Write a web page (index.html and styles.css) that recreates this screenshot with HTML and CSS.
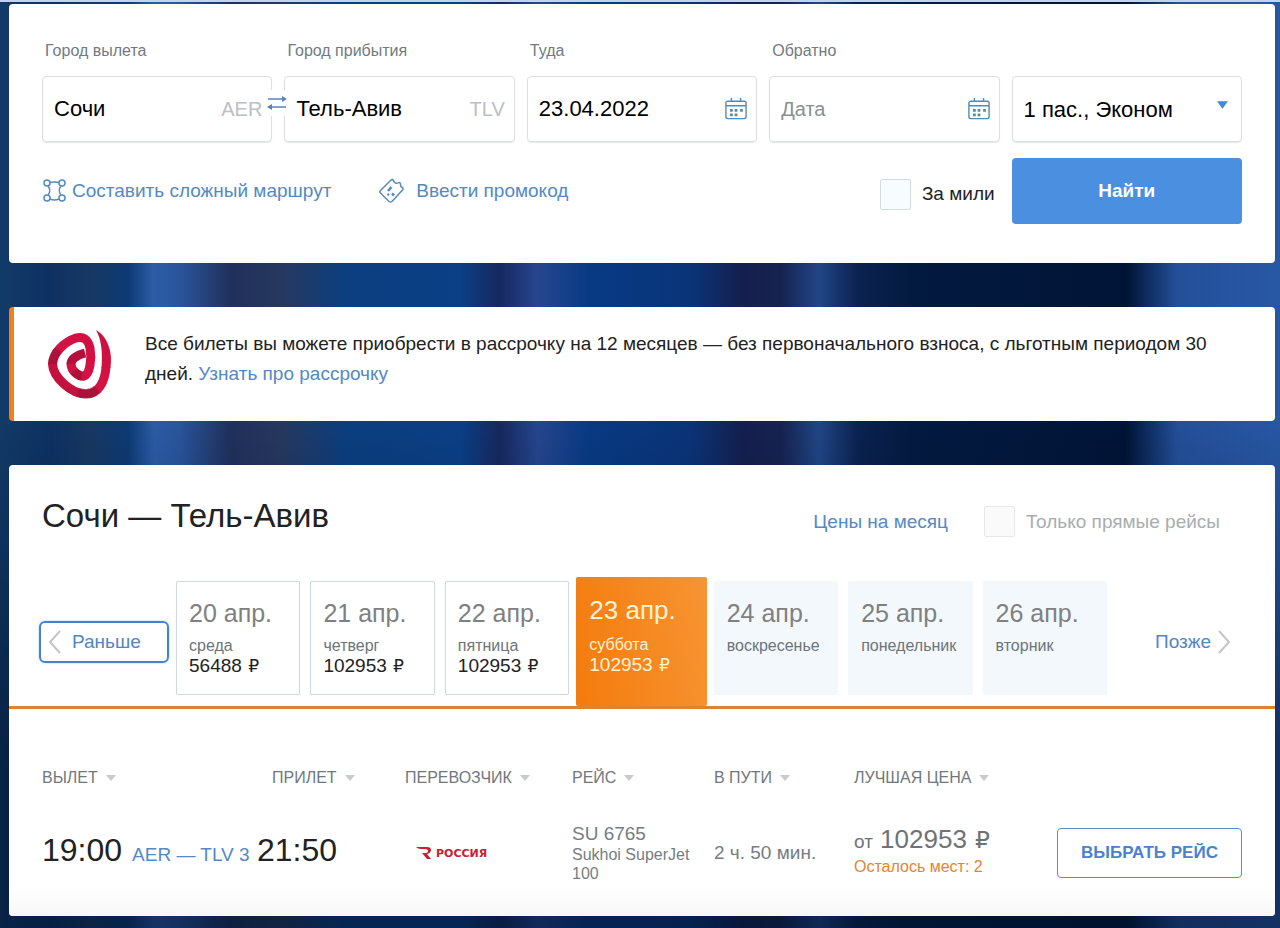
FILE: index.html
```html
<!DOCTYPE html>
<html lang="ru">
<head>
<meta charset="utf-8">
<meta name="viewport" content="width=device-width, initial-scale=1">
<title>Сочи — Тель-Авив</title>
<link rel="stylesheet" href="styles.css">
</head>
<body>
<svg class="defs" aria-hidden="true">
  <symbol id="calendar" viewBox="0 0 24 24">
    <path d="M3 3.500h18a2 2 0 0 1 2 2v15a2 2 0 0 1-2 2h-18a2 2 0 0 1-2-2v-15a2 2 0 0 1 2-2zM1 8.500h22M7 0v4M17 0v4" fill="none" stroke="currentColor" stroke-width="1.500"/>
    <path d="M10.500 12h3v3h-3zM5.500 12h3v3h-3zM16.500 12h3v3h-3zM5.500 17h3v3h-3zM10.500 17h3v3h-3z" fill="currentColor"/>
  </symbol>
</svg>
<main class="page">
  <form class="card search">
    <div class="field">
      <label class="field-label" for="from">Город вылета</label>
      <div class="box">
        <input class="control" id="from" type="text" value="Сочи">
        <span class="code">AER</span>
      </div>
      <button class="swap" type="button" aria-label="Поменять местами">
        <svg width="20" height="14" viewBox="0 0 20 14"><path d="M1 3h16M3 11h16" stroke="currentColor" stroke-width="1.500"/><path d="M15 0l5 3-5 3zM5 8l-5 3 5 3z" fill="currentColor"/></svg>
      </button>
    </div>
    <div class="field">
      <label class="field-label" for="to">Город прибытия</label>
      <div class="box">
        <input class="control" id="to" type="text" value="Тель-Авив">
        <span class="code">TLV</span>
      </div>
    </div>
    <div class="field">
      <label class="field-label" for="out">Туда</label>
      <div class="box">
        <input class="control" id="out" type="text" value="23.04.2022">
        <svg class="calendar"><use href="#calendar"/></svg>
      </div>
    </div>
    <div class="field">
      <label class="field-label" for="back">Обратно</label>
      <div class="box">
        <input class="control" id="back" type="text" placeholder="Дата">
        <svg class="calendar"><use href="#calendar"/></svg>
      </div>
    </div>
    <div class="field field-last">
      <div class="box">
        <select class="control" aria-label="Пассажиры и класс"><option>1 пас., Эконом</option></select>
        <svg class="caret" width="11" height="8" viewBox="0 0 12 8"><path d="M0 0h12L6 8z" fill="currentColor"/></svg>
      </div>
    </div>
    <div class="links">
      <a class="link icon-link" href="#">
        <svg width="24" height="24" viewBox="0 0 24 24" fill="none" stroke="currentColor" stroke-width="1.500"><circle cx="5" cy="4" r="3"/><circle cx="20" cy="4" r="3"/><circle cx="5" cy="19" r="3"/><circle cx="20" cy="19" r="3"/><path d="M8 3.500q4.500-1 9 0M8 20q4.500 2 9 0M6 7q3.500 4.500 0 9M19 7q-3.500 4.500 0 9"/></svg>
        Составить сложный маршрут
      </a>
      <a class="link icon-link promo" href="#">
        <svg width="26" height="26" viewBox="0 0 26 26" fill="none" stroke="currentColor" stroke-width="1.500"><path d="M2 13L13 2q1.500-1 2.500.500.500 2 2 2.500 2 .500 3.500-.500 1.500 0 1.500 2 0 2.500 2 3 1 1.500 0 2.500L14 23.500q-1.500 1-3 0L2.500 15q-1-1-.500-2z"/><path d="M10 13l3.500-4" stroke-width="2.500"/><path d="M9.500 16l1.500 1M14 15.500l2 2" stroke-width="2.500"/></svg>
        Ввести промокод
      </a>
    </div>
    <label class="check miles"><input class="tick" type="checkbox">За мили</label>
    <button class="submit" type="submit">Найти</button>
  </form>

  <section class="card offer">
    <svg class="offer-logo" width="66" height="72" viewBox="0 0 66 72">
      <defs>
        <linearGradient id="swirl" x1="0" y1="1" x2="1" y2="0">
          <stop offset="0" stop-color="#b80f3a"/>
          <stop offset=".5" stop-color="#d51243"/>
          <stop offset="1" stop-color="#cf1141"/>
        </linearGradient>
      </defs>
      <path d="M38 24C30 26 24 30 24 35 24 42 32 48 37 47 43 45 45 30 43 19 41 10 36 7 29 9 17 13 6 24 5.500 35 6 48 24 65 39 65 52 65 58 52 59 38" fill="none" stroke="url(#swirl)" stroke-width="9"/>
      <path d="M54.500 39C56 22 54 10 49 1 60 7 66 22 63.500 39z" fill="#cf1141"/>
      <path d="M24 35Q24 28 38 24M5.500 35Q6 28 11 21M31 63Q42 67 50 60M27 42Q30 46 35 47" fill="none" stroke="#7d1231" stroke-width="9" opacity=".4"/>
    </svg>
    <p class="offer-text">Все билеты вы можете приобрести в рассрочку на 12 месяцев — без первоначального взноса, с льготным периодом 30 дней. <a class="link" href="#">Узнать про рассрочку</a></p>
  </section>

  <section class="card results">
    <header class="results-head">
      <h1 class="title">Сочи — Тель-Авив</h1>
      <a class="link month" href="#">Цены на месяц</a>
      <label class="check direct"><input class="tick" type="checkbox" disabled>Только прямые рейсы</label>
    </header>

    <nav class="dates">
      <button class="shift earlier" type="button"><svg width="14" height="24" viewBox="0 0 14 24"><path d="M12 1L2 12l10 11"/></svg>Раньше</button>
      <div class="days">
        <button class="day" type="button"><span class="date">20 апр.</span><span class="weekday">среда</span><span class="fare">56488 <span class="ruble">₽</span></span></button>
        <button class="day" type="button"><span class="date">21 апр.</span><span class="weekday">четверг</span><span class="fare">102953 <span class="ruble">₽</span></span></button>
        <button class="day" type="button"><span class="date">22 апр.</span><span class="weekday">пятница</span><span class="fare">102953 <span class="ruble">₽</span></span></button>
        <button class="day day-active" type="button"><span class="date">23 апр.</span><span class="weekday">суббота</span><span class="fare">102953 <span class="ruble">₽</span></span></button>
        <button class="day day-empty" type="button"><span class="date">24 апр.</span><span class="weekday">воскресенье</span></button>
        <button class="day day-empty" type="button"><span class="date">25 апр.</span><span class="weekday">понедельник</span></button>
        <button class="day day-empty" type="button"><span class="date">26 апр.</span><span class="weekday">вторник</span></button>
      </div>
      <button class="shift later" type="button">Позже<svg width="14" height="24" viewBox="0 0 14 24"><path d="M2 1l10 11L2 23"/></svg></button>
    </nav>

    <div class="flights-wrap">
      <table class="flights">
        <colgroup><col class="c-dep"><col class="c-arr"><col class="c-carrier"><col class="c-flight"><col class="c-time"><col class="c-price"><col class="c-action"></colgroup>
        <thead>
          <tr>
            <th><button class="sort" type="button">ВЫЛЕТ</button></th>
            <th class="arrive-head"><button class="sort" type="button">ПРИЛЕТ</button></th>
            <th><button class="sort" type="button">ПЕРЕВОЗЧИК</button></th>
            <th><button class="sort" type="button">РЕЙС</button></th>
            <th><button class="sort" type="button">В ПУТИ</button></th>
            <th><button class="sort" type="button">ЛУЧШАЯ ЦЕНА</button></th>
            <td></td>
          </tr>
        </thead>
        <tbody>
          <tr>
            <td class="raised"><div class="depart"><span class="time">19:00</span><a class="link" href="#">AER — TLV 3</a></div></td>
            <td class="raised"><span class="time">21:50</span></td>
            <td>
              <div class="carrier">
                <svg width="16" height="12" viewBox="0 0 16 12"><path d="M0 0h11q4 0 4 3 0 3-4 4l4 5h-4L6 6h3q3 0 3-2T9 2H5Q2 2 0 0z" fill="#c8202f"/></svg>
                <span>РОССИЯ</span>
              </div>
            </td>
            <td><div class="flight-no">SU 6765</div><div class="plane">Sukhoi SuperJet 100</div></td>
            <td class="duration">2 ч. 50 мин.</td>
            <td class="raised"><div class="price"><span class="price-from">от</span> 102953 <span class="ruble">₽</span></div><div class="seats">Осталось мест: 2</div></td>
            <td><button class="choose" type="button">ВЫБРАТЬ РЕЙС</button></td>
          </tr>
        </tbody>
      </table>
    </div>
  </section>
</main>
</body>
</html>
```
FILE: styles.css
```css
* {
  box-sizing: border-box;
}

body {
  margin: 0;
  min-height: 100vh;
  border-top: 2px solid #c3d3ea;
  background:
    linear-gradient(#0000 0, #0000 45%, #00102a88 80%),
    linear-gradient(90deg, #123a68 0, #0d3162 4%, #183862 7%, #0d3a75 10%, #2c5ca6 12%, #2a559d 14%, #20305c 18%, #27385e 22%, #0b3f80 27%, #0b3f86 36%, #17285e 39%, #26468f 42%, #083a84 46%, #0a3478 54%, #141f4e 58%, #162250 61%, #214686 64%, #0b2250 67%, #031a40 71%, #001436 88%, #24509a 92%, #2857a4 100%);
  color: #222;
  font-family: "Liberation Sans", Arial, sans-serif;
  font-size: 19px;
}

button,
input,
select {
  font: inherit;
  color: inherit;
}

button {
  cursor: pointer;
}

.defs {
  display: none;
}

.page {
  display: flex;
  flex-direction: column;
  gap: 44px;
  padding: 2px 5px 12px 9px;
}

.card {
  background: #fff;
  border-radius: 4px;
}

.link {
  color: #5389c5;
  text-decoration: none;
}

/* Search form */

.search {
  display: grid;
  grid-template-columns: repeat(5, minmax(0, 1fr));
  gap: 16px 12px;
  padding: 37px 33px 39px;
}

.field {
  position: relative;
  display: flex;
  flex-direction: column;
  gap: 15px;
}

.field-last {
  justify-content: flex-end;
}

.field-label {
  padding-left: 3px;
  color: #727a80;
  font-size: 16px;
  line-height: 20px;
}

.box {
  position: relative;
  display: flex;
  align-items: center;
  height: 66px;
  padding: 0 9px 0 1px;
  border: 1px solid #dcdfe2;
  border-radius: 4px;
  box-shadow: 0 1px 1px #e6e8ea;
}

.control {
  flex: 1;
  width: 0;
  min-width: 0;
  height: 100%;
  padding: 0 0 0 10px;
  border: 0;
  outline: 0;
  background: none;
  color: #000;
  font-size: 22px;
  appearance: none;
}

.control::placeholder {
  color: #8b8f93;
  font-size: 20px;
  opacity: 1;
}

.code {
  color: #bcc0c3;
  font-size: 20px;
}

.calendar {
  width: 22px;
  height: 22px;
  color: #5389b5;
}

.caret {
  position: absolute;
  top: 24px;
  right: 13px;
  color: #4a88d0;
  pointer-events: none;
}

.swap {
  position: absolute;
  z-index: 1;
  right: -16px;
  bottom: 26px;
  display: flex;
  padding: 6px 1px;
  border: 0;
  background: #fff;
  color: #5c82bd;
}

.links {
  grid-column: span 3;
  display: flex;
  align-items: center;
  gap: 47px;
}

.icon-link {
  display: flex;
  align-items: center;
  gap: 6px;
}

.promo {
  gap: 12px;
}

.check {
  display: flex;
  align-items: center;
  gap: 11px;
}

.tick {
  width: 31px;
  height: 31px;
  margin: 0;
  border: 1px solid #d3dae0;
  border-radius: 2px;
  background: #f7fcff;
  appearance: none;
}

.miles {
  justify-content: flex-end;
  padding: 6px 5px 0 0;
}

.submit {
  height: 66px;
  border: 0;
  border-radius: 4px;
  background: #4a8fe0;
  color: #fff;
  font-weight: bold;
}

/* Instalment offer */

.offer {
  display: flex;
  gap: 32px;
  padding: 22px 44px 20px 33px;
  border-left: 5px solid #ee8218;
}

.offer-logo {
  flex: none;
}

.offer-text {
  margin: 0;
  line-height: 30px;
}

/* Results */

.results-head {
  display: flex;
  align-items: flex-end;
  padding: 30px 55px 44px 33px;
}

.title {
  flex: 1;
  margin: 0;
  font-size: 33px;
  font-weight: normal;
  line-height: 42px;
}

.month {
  margin-right: 36px;
  line-height: 31px;
}

.direct {
  color: #a9adb0;
}

.direct .tick {
  border-color: #e6e8ea;
  background: #fafafa;
}

.dates {
  display: flex;
  border-bottom: 3px solid #df842c;
  padding: 0 44px 0 30px;
}

.shift {
  display: flex;
  align-items: center;
  align-self: center;
  height: 42px;
  margin-bottom: 3px;
  padding: 0;
  border: 0;
  background: none;
  color: #4f86c3;
}

.shift svg {
  fill: none;
  stroke: #c3c5c7;
  stroke-width: 2;
}

.earlier {
  gap: 10px;
  width: 130px;
  margin-right: 7px;
  padding-left: 7px;
  border: 2px solid #4683cc;
  border-radius: 6px;
  box-shadow: 0 0 2px #8fc0f5;
}

.later {
  gap: 6px;
  margin-left: 48px;
}

.days {
  flex: 1;
  display: grid;
  grid-template-columns: repeat(7, minmax(0, 1fr));
  gap: 10px;
}

.day {
  display: flex;
  flex-direction: column;
  align-items: flex-start;
  min-height: 114px;
  margin-bottom: 11px;
  padding: 15px 0 0 12px;
  border: 1px solid #d3d8e0;
  border-radius: 2px;
  background: #fff;
  box-shadow: 0 0 1px #dfe3ea;
  text-align: left;
  white-space: nowrap;
}

.day-empty {
  border-color: #f3f8fd;
  background: #f3f8fd;
  box-shadow: none;
}

.day-active {
  margin: -4px -3px 0;
  padding-top: 16px;
  border-color: transparent;
  background: linear-gradient(80deg, #f47b0c, #f79433) border-box;
  box-shadow: none;
  color: #fff3d6;
}

.date {
  margin-bottom: 7px;
  color: #808080;
  font-size: 25px;
  line-height: 32px;
}

.weekday {
  color: #6c757a;
  font-size: 16px;
  line-height: 20px;
}

.fare {
  line-height: 20px;
}

.ruble {
  margin-left: 1px;
  font-family: "DejaVu Sans", sans-serif;
  font-size: 90%;
  line-height: 1;
}

.day-active .date {
  margin-bottom: 9px;
  font-size: 26px;
}

.day-active .date,
.day-active .weekday {
  color: inherit;
}

.flights-wrap {
  padding: 56px 33px 1px;
  border-radius: 0 0 4px 4px;
  background: linear-gradient(#fff 85%, #f7f7f8);
}

.flights {
  width: 100%;
  border-collapse: collapse;
  table-layout: fixed;
}

.flights th,
.flights td {
  padding: 0;
  text-align: left;
}

.flights th {
  height: 26px;
  font-weight: normal;
}

.flights .arrive-head {
  padding-left: 15px;
}

.flights tbody td {
  height: 124px;
}

.flights .raised {
  padding-bottom: 6px;
}

.c-dep { width: 215px; }
.c-arr { width: 148px; }
.c-carrier { width: 167px; }
.c-flight { width: 142px; }
.c-time { width: 140px; }
.c-price { width: 203px; }
.c-action { width: 185px; }

.sort {
  display: flex;
  align-items: center;
  gap: 8px;
  padding: 0;
  border: 0;
  background: none;
  color: #6f787d;
  font-size: 16px;
  white-space: nowrap;
}

.sort::after {
  content: "";
  border: 5px solid transparent;
  border-top: 6px solid #c8cbcd;
  border-bottom: 0;
}

.depart {
  display: flex;
  align-items: baseline;
  gap: 10px;
  white-space: nowrap;
}

.time {
  font-size: 32px;
}

.carrier {
  display: flex;
  align-items: center;
  gap: 4px;
  padding-left: 11px;
  color: #c8202f;
  font-family: "DejaVu Sans", sans-serif;
  font-size: 11px;
  font-weight: bold;
}

.flight-no,
.duration {
  color: #767d82;
}

.plane {
  padding-right: 16px;
  color: #767d82;
  font-size: 16px;
  line-height: 19px;
}

.price {
  color: #6d7377;
  font-size: 26px;
  line-height: 30px;
}

.price-from {
  font-size: 19px;
}

.seats {
  color: #e08535;
  font-size: 16px;
  line-height: 20px;
}

.choose {
  width: 100%;
  height: 50px;
  border: 1px solid #5f8cbd;
  border-radius: 4px;
  background: #fff;
  color: #4b82cf;
  font-size: 17px;
  font-weight: bold;
}
```
